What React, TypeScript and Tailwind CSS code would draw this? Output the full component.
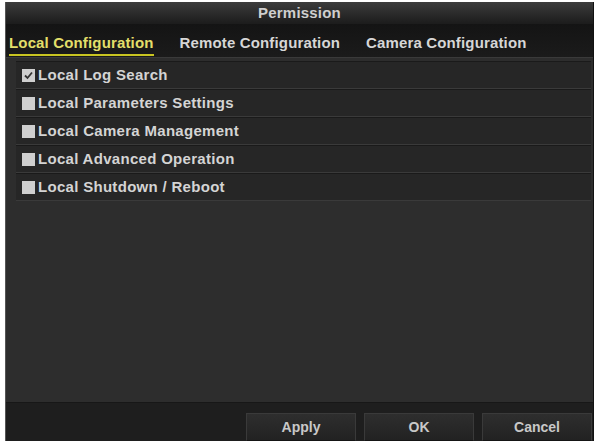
import React, { useState } from 'react';

const items = [
  'Local Log Search',
  'Local Parameters Settings',
  'Local Camera Management',
  'Local Advanced Operation',
  'Local Shutdown / Reboot',
];

const tabs = ['Local Configuration', 'Remote Configuration', 'Camera Configuration'];

const App: React.FC = () => {
  const [checked, setChecked] = useState<boolean[]>([true, false, false, false, false]);
  const [activeTab, setActiveTab] = useState(0);

  const toggle = (i: number) =>
    setChecked(prev => prev.map((c, idx) => (idx === i ? !c : c)));

  return (
    <div
      className="w-[598px] h-[443px] bg-white pt-[2px] pl-[5px] pr-[4px] pb-[2px]"
      style={{ fontFamily: '"Liberation Sans", Arial, sans-serif' }}
    >
      <div className="h-full flex flex-col bg-[#2d2d2d] border-l border-[#555] border-r border-r-[#111]">
        {/* Title */}
        <div className="h-[22px] flex items-center justify-center bg-gradient-to-b from-[#3c3c3c] to-[#1c1c1c] text-[#cfcfcf] text-[15px] font-bold tracking-[0.2px]">
          Permission
        </div>

        {/* Tabs */}
        <div className="h-[34px] flex items-start gap-[26px] pl-[3px] bg-gradient-to-b from-[#141414] to-[#1b1b1b] border-b border-[#3a3a3a]">
          {tabs.map((tab, i) => (
            <button
              key={tab}
              onClick={() => setActiveTab(i)}
              className={
                i === activeTab
                  ? 'pt-[10px] pb-[2px] text-[15px] font-bold tracking-[0.15px] text-[#e3df6a] border-b-2 border-[#c9c522] leading-[18px]'
                  : 'pt-[10px] pb-[2px] text-[15px] font-bold tracking-[0.15px] text-[#d6d6d6] border-b-2 border-transparent leading-[18px]'
              }
            >
              {tab}
            </button>
          ))}
        </div>

        {/* Permission list */}
        <div className="flex-1 pt-[3px] pl-[10px] pr-[2px]">
          {items.map((item, i) => (
            <div
              key={item}
              onClick={() => toggle(i)}
              className="h-[28px] flex items-center gap-[3px] pl-[6px] bg-[#262626] border-t border-[#1a1a1a] border-b border-b-[#3a3a3a] cursor-pointer"
            >
              <span className="w-[13px] h-[13px] bg-[#cfcfcf] flex items-center justify-center">
                {checked[i] && (
                  <svg width="11" height="11" viewBox="0 0 11 11">
                    <path d="M2 5.5 L4.5 8 L9 2.5" fill="none" stroke="#333" strokeWidth="1.8" />
                  </svg>
                )}
              </span>
              <span className="text-[15px] font-bold text-[#d4d4d4] tracking-[0.3px]">{item}</span>
            </div>
          ))}
        </div>

        {/* Footer */}
        <div className="h-[39px] flex justify-end items-start gap-[8px] pt-[10px] pr-[1px] bg-[#1e1e1e] border-t border-[#171717]">
          {['Apply', 'OK', 'Cancel'].map(label => (
            <button
              key={label}
              className="w-[110px] h-[28px] flex items-center justify-center bg-gradient-to-b from-[#2e2e2e] to-[#222] border border-[#3a3a3a] border-b-[#151515] text-[14px] font-bold text-[#c8c8c8]"
            >
              {label}
            </button>
          ))}
        </div>
      </div>
    </div>
  );
};

export default App;
